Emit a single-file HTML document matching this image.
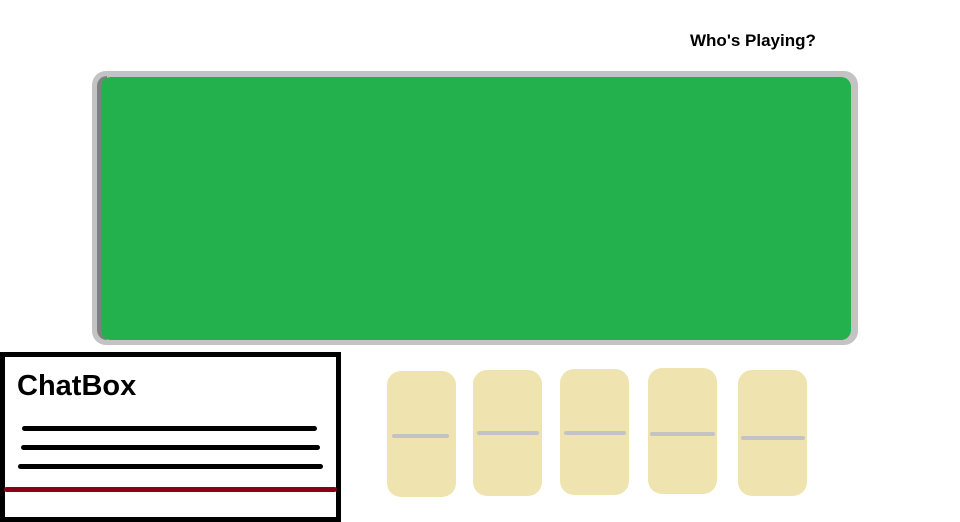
<!DOCTYPE html>
<html><head><style>
body{margin:0;width:960px;height:522px;background:#fff;position:relative;overflow:hidden;font-family:"Liberation Sans",sans-serif}
.t{position:absolute;left:690px;top:31px;font-weight:bold;font-size:17px}
.outer{position:absolute;left:92px;top:71px;width:756px;height:264px;border:5px solid #c3c3c3;border-radius:14px;background:#c3c3c3}
.dk{position:absolute;left:97px;top:76px;width:10px;height:264px;background:#7f7f7f;border-radius:10px 0 0 10px}
.green{position:absolute;left:101px;top:77px;width:750px;height:263px;background:#22b14c;border-radius:10px}
.chat{position:absolute;left:0;top:352px;width:331px;height:160px;border:5px solid #000;background:#fff}
.chat h1{position:absolute;left:12px;top:13px;margin:0;font-size:29px;font-weight:bold}
.l{position:absolute;height:5px;background:#000;border-radius:3px}
.tile{position:absolute;background:#efe4b0;border-radius:14px}
.bar{position:absolute;height:4px;background:#c3c3c3;border-radius:2px}
</style></head><body>
<div class="t">Who's Playing?</div>
<div class="outer"></div>
<div class="dk"></div>
<div class="green"></div>
<div class="chat"><h1>ChatBox</h1>
<div class="l" style="left:17px;top:69px;width:295px"></div>
<div class="l" style="left:16px;top:88px;width:299px"></div>
<div class="l" style="left:13px;top:107px;width:305px"></div>
<div class="l" style="left:-1px;top:130px;width:333px;background:#880015"></div>
</div>
<div class="tile" style="left:387px;top:371px;width:69px;height:126px"></div>
<div class="tile" style="left:473px;top:370px;width:69px;height:126px"></div>
<div class="tile" style="left:560px;top:369px;width:69px;height:126px"></div>
<div class="tile" style="left:648px;top:368px;width:69px;height:126px"></div>
<div class="tile" style="left:738px;top:370px;width:69px;height:126px"></div>
<div class="bar" style="left:392px;top:434px;width:57px"></div>
<div class="bar" style="left:477px;top:431px;width:62px"></div>
<div class="bar" style="left:564px;top:431px;width:62px"></div>
<div class="bar" style="left:650px;top:432px;width:65px"></div>
<div class="bar" style="left:741px;top:436px;width:64px"></div>
</body></html>
